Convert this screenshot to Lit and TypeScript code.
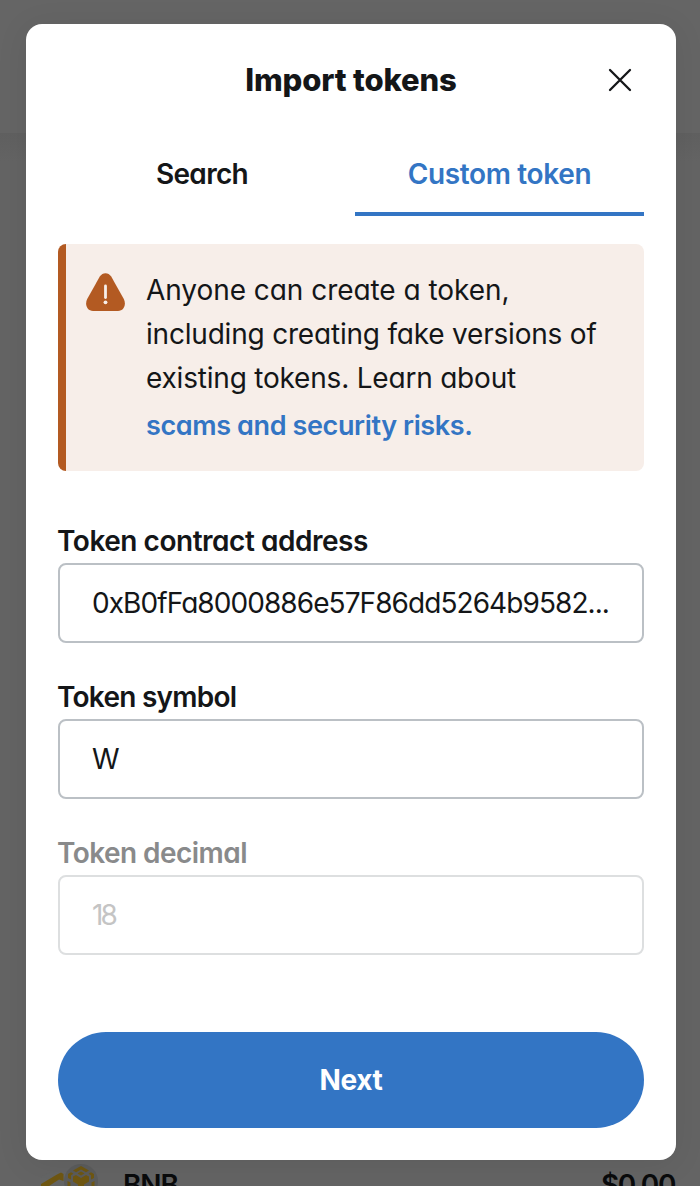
import { LitElement, html, css, svg } from "lit";
import { customElement, property } from "lit/decorators.js";

@customElement("token-field")
class TokenField extends LitElement {
  @property() label = "";
  @property() value = "";
  @property() kind = "";

  static styles = css`
    :host { display: block; height: 156px; }
    .label { height: 44px; line-height: 44px; margin-left: -1px; font-size: 28px; font-weight: 570; color: #141618; letter-spacing: -0.47px; white-space: nowrap; }
    .box { box-sizing: border-box; height: 80px; border: 2px solid #bbc0c5; border-radius: 8px; padding: 0 32px; line-height: 76px; font-size: 28px; color: #141618; white-space: nowrap; overflow: hidden; }
    .symbol .label { letter-spacing: -0.75px; }
    .disabled .label { color: #898a8b; letter-spacing: -0.55px; }
    .disabled .box { border-color: #dddfe0; color: #c4c4c4; letter-spacing: -2.8px; }
    .address .text { letter-spacing: -0.93px; }
  `;

  render() {
    return html`<div class=${this.kind}>
      <div class="label">${this.label}</div>
      <div class="box"><span class="text">${this.value}</span></div>
    </div>`;
  }
}

const closeIcon = svg`<svg class="close" viewBox="0 0 24 24" width="24" height="24"><path d="M2 2L22 22M22 2L2 22" fill="none" stroke="#141618" stroke-width="2.3" stroke-linecap="round"/></svg>`;

@customElement("app-root")
class AppRoot extends LitElement {
  static styles = css`
    :host { display: block; position: relative; width: 700px; height: 1186px; overflow: hidden; background: #656565; font-family: Inter, "Open Sans", sans-serif; font-feature-settings: "cv11"; color: #141618; }
    .page { display: flex; flex-direction: column; height: 1186px; }
    .bar { height: 133px; flex: none; }
    .list { flex: 1; display: flex; align-items: flex-end; background: linear-gradient(#606060, #646464 28px); }
    .row { flex: 1; display: flex; height: 28px; padding: 0 24px 0 40px; line-height: 54px; font-size: 28px; font-weight: 600; color: #0a0b0c; }
    .coins { flex: none; width: 60px; height: 28px; margin-right: 23px; }
    .name { flex: 1; letter-spacing: -1.1px; }
    .amount { letter-spacing: -1.4px; margin-right: 1px; }
    .dialog { position: absolute; left: 26px; top: 24px; width: 650px; height: 1136px; box-sizing: border-box; padding: 0 32px 32px; display: flex; flex-direction: column; background: #fff; border-radius: 16px; box-shadow: 0 4px 32px rgba(0, 0, 0, 0.08); }
    .head { display: grid; grid-template-columns: 48px 1fr 48px; align-items: center; height: 112px; }
    .title { grid-column: 2; text-align: center; font-size: 31px; line-height: 40px; font-weight: 800; white-space: nowrap; letter-spacing: -0.15px; }
    .close { justify-self: center; }
    .tabs { display: grid; grid-template-columns: 297px 289px; height: 80px; }
    .tab { box-sizing: border-box; height: 80px; text-align: center; line-height: 76px; font-size: 28px; font-weight: 570; white-space: nowrap; letter-spacing: -0.35px; }
    .search { padding-right: 9px; letter-spacing: -0.7px; }
    .active { color: #3375c4; border-bottom: 4px solid #3375c4; }
    .warning { box-sizing: border-box; display: flex; height: 227px; margin-top: 28px; border-radius: 8px; overflow: hidden; background: #f7eee9; border-left: 8px solid #b35a22; padding: 24px 0 0 20px; }
    .icon { flex: none; width: 40px; height: 40px; margin: 4px 20px 0 0; }
    .copy { line-height: 44px; font-size: 28px; white-space: nowrap; }
    .l1 { letter-spacing: -0.05px; }
    .l2, .l3 { letter-spacing: -0.2px; }
    .link { color: #3375c4; font-size: 27px; font-weight: 600; line-height: 52px; letter-spacing: -0.38px; }
    .fields { margin-top: 48px; flex: 1; }
    .next { height: 96px; border-radius: 48px; background: #3375c4; color: #fff; text-align: center; line-height: 96px; font-size: 28px; font-weight: 650; letter-spacing: -0.4px; }
  `;

  render() {
    return html`
      <div class="page">
        <div class="bar"></div>
        <div class="list">
          <div class="row">
            <svg class="coins" viewBox="40 1158 60 28">
              <circle cx="56" cy="1196" r="24" fill="#646565"/>
              <circle cx="81" cy="1181" r="17" fill="#5b5c5c"/>
              <g fill="#6f5712">
                <path d="M41 1184L57 1174.500L61 1172.500L63.500 1174V1181L59 1179.500L49 1186H41Z"/>
                <path d="M73 1170.500L81 1166L89 1170.500L86 1172.200L81 1169.500L76 1172.200ZM77.500 1173.500L81 1171.500L84.500 1173.500L81 1175.500ZM68 1174L71 1172.200L73.500 1173.700L71 1175.200V1179.500L68 1178ZM94 1174L91 1172.200L88.500 1173.700L91 1175.200V1179.500L94 1178ZM73 1176.500L76 1175L81 1178L86 1175L89 1176.500V1181.500L84 1184.500V1186H78V1184.500L73 1181.500ZM67.500 1181L70.500 1182.500V1186H67.500ZM94.500 1181L91.500 1182.500V1186H94.500Z"/>
              </g>
            </svg>
            <span class="name">BNB</span><span class="amount">$0.00</span>
          </div>
        </div>
      </div>
      <div class="dialog">
        <div class="head"><div class="title">Import tokens</div>${closeIcon}</div>
        <div class="tabs"><div class="tab search">Search</div><div class="tab active">Custom token</div></div>
        <div class="warning">
          <svg class="icon" viewBox="0 0 40 40">
            <path d="M13.800 4.500C16.600 0 22.400 0 25.200 4.500L37.800 27C40.500 32.500 38 39 32 39H7C1 39-1.500 32.500 1.200 27Z" fill="#b35a22"/>
            <path d="M19.500 14V25.500" stroke="#f7eee9" stroke-width="2.800" stroke-linecap="round"/>
            <circle cx="19.500" cy="30.300" r="1.900" fill="#f7eee9"/>
          </svg>
          <div class="copy">
            <div class="l1">Anyone can create a token,</div>
            <div class="l2">including creating fake versions of</div>
            <div class="l3">existing tokens. Learn about</div>
            <div class="link">scams and security risks.</div>
          </div>
        </div>
        <div class="fields">
          <token-field label="Token contract address" value="0xB0fFa8000886e57F86dd5264b9582..." kind="address"></token-field>
          <token-field label="Token symbol" value="W" kind="symbol"></token-field>
          <token-field label="Token decimal" value="18" kind="disabled"></token-field>
        </div>
        <div class="next">Next</div>
      </div>`;
  }
}
